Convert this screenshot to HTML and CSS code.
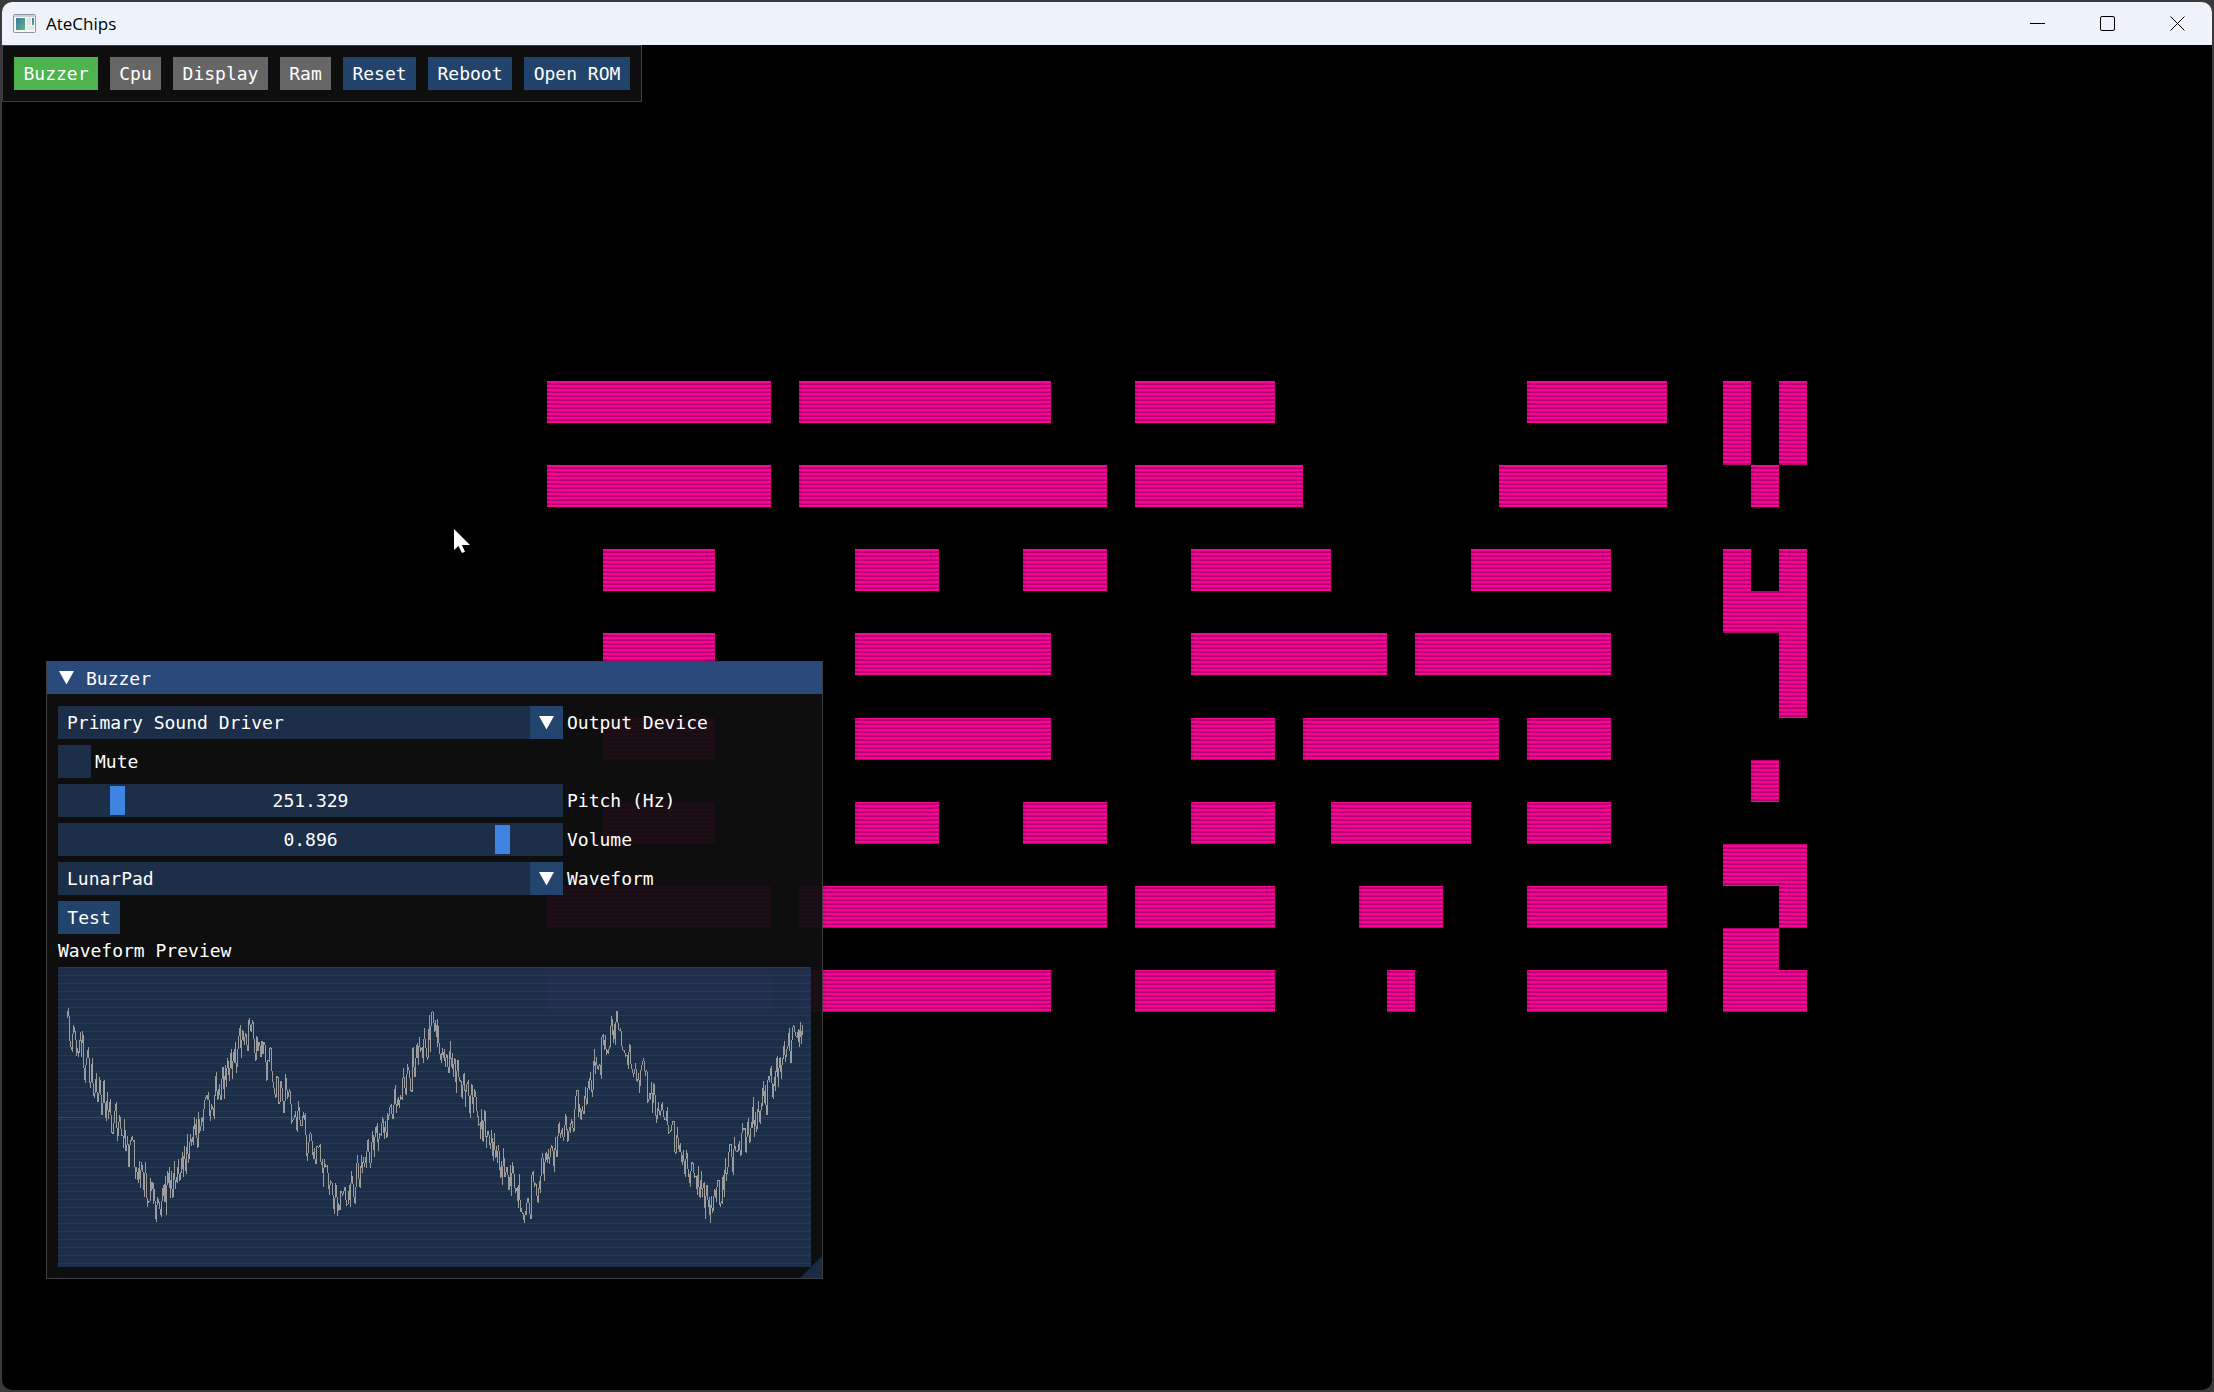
FILE: index.html
```html
<!DOCTYPE html>
<html lang="en">
<head>
  <title>AteChips</title>
  <meta charset="UTF-8">
  <link rel="stylesheet" href="styles.css">
</head>
<body>
  <div class="app">
    <header class="titlebar">
      <svg class="app-icon" viewBox="0 0 23 19" aria-hidden="true">
        <defs>
          <linearGradient id="pane" x1="0" y1="0" x2="1" y2="1">
            <stop offset="0" stop-color="#3f74a8"/>
            <stop offset="1" stop-color="#5cb87c"/>
          </linearGradient>
        </defs>
        <rect x="0.5" y="0.5" width="22" height="18" rx="1" fill="#f4f4f4" stroke="#8d949c"/>
        <rect x="1" y="1" width="21" height="2" fill="#c9d0d8"/>
        <rect x="3" y="4" width="9" height="12" fill="url(#pane)"/>
        <rect x="14" y="4" width="4" height="7" fill="#e2e2e2"/>
        <rect x="19" y="4" width="2" height="7" fill="url(#pane)"/>
        <rect x="14" y="12" width="7" height="4" fill="#e6e6e6"/>
      </svg>
      <h1>AteChips</h1>
      <div class="window-btns">
        <button aria-label="Minimize"><svg viewBox="0 0 15 15"><path d="M0 7.5h15"/></svg></button>
        <button aria-label="Maximize"><svg viewBox="0 0 15 15"><rect x="0.5" y="0.5" width="14" height="14" rx="1.5"/></svg></button>
        <button aria-label="Close"><svg viewBox="0 0 15 15"><path class="diag" d="M0.5 0.5l14 14M14.5 0.5l-14 14"/></svg></button>
      </div>
    </header>

    <main class="screen">
      <div class="display">
        <svg viewBox="0 0 64 32" preserveAspectRatio="none" role="img" aria-label="Chip-8 display">
          <path d="M12 8h8v1h-8z M21 8h9v1h-9z M33 8h5v1h-5z M47 8h5v1h-5z
            M12 10h8v1h-8z M21 10h11v1h-11z M33 10h6v1h-6z M46 10h6v1h-6z
            M14 12h4v1h-4z M23 12h3v1h-3z M29 12h3v1h-3z M35 12h5v1h-5z M45 12h5v1h-5z
            M14 14h4v1h-4z M23 14h7v1h-7z M35 14h7v1h-7z M43 14h7v1h-7z
            M14 16h4v1h-4z M23 16h7v1h-7z M35 16h3v1h-3z M39 16h7v1h-7z M47 16h3v1h-3z
            M14 18h4v1h-4z M23 18h3v1h-3z M29 18h3v1h-3z M35 18h3v1h-3z M40 18h5v1h-5z M47 18h3v1h-3z
            M12 20h8v1h-8z M21 20h11v1h-11z M33 20h5v1h-5z M41 20h3v1h-3z M47 20h5v1h-5z
            M12 22h8v1h-8z M21 22h9v1h-9z M33 22h5v1h-5z M42 22h1v1h-1z M47 22h5v1h-5z
            M54 8h1v2h-1z M56 8h1v2h-1z M55 10h1v1h-1z
            M54 12h1v1h1v-1h1v4h-1v-2h-2z M55 17h1v1h-1z
            M54 19h3v2h-1v-1h-2z M54 21h2v1h1v1h-3z"/>
        </svg>
      </div>

      <nav class="toolbar">
        <button class="on">Buzzer</button>
        <button class="off">Cpu</button>
        <button class="off">Display</button>
        <button class="off">Ram</button>
        <button>Reset</button>
        <button>Reboot</button>
        <button>Open ROM</button>
      </nav>

      <section class="panel">
        <h2>
          <svg class="arrow" viewBox="0 0 15 14" aria-hidden="true"><path d="M0 0h15l-7.500 13.500z"/></svg>
          Buzzer
        </h2>
        <div class="panel-body">
          <div class="row">
            <div class="combo">
              <select id="device"><option>Primary Sound Driver</option></select>
              <span class="combo-btn"><svg class="arrow" viewBox="0 0 15 14" aria-hidden="true"><path d="M0 0h15l-7.500 13.500z"/></svg></span>
            </div>
            <label for="device">Output Device</label>
          </div>
          <div class="row check">
            <input type="checkbox" id="mute">
            <label for="mute">Mute</label>
          </div>
          <div class="row">
            <div class="slider">
              <input type="range" id="pitch" min="200" max="700" step="0.001" value="251.329">
              <output for="pitch">251.329</output>
            </div>
            <label for="pitch">Pitch (Hz)</label>
          </div>
          <div class="row">
            <div class="slider">
              <input type="range" id="volume" min="0" max="1" step="0.001" value="0.896">
              <output for="volume">0.896</output>
            </div>
            <label for="volume">Volume</label>
          </div>
          <div class="row">
            <div class="combo">
              <select id="waveform"><option>LunarPad</option></select>
              <span class="combo-btn"><svg class="arrow" viewBox="0 0 15 14" aria-hidden="true"><path d="M0 0h15l-7.500 13.500z"/></svg></span>
            </div>
            <label for="waveform">Waveform</label>
          </div>
          <button class="test">Test</button>
          <p>Waveform Preview</p>
          <div class="plot">
            <svg viewBox="0 0 2259 900" preserveAspectRatio="none" role="img" aria-label="Waveform Preview">
              <path class="zero" d="M0 451.500h2259"/>
              <polyline transform="translate(-54 -201)" points="82,340 82,353 85,324 88,360 88,412 91,430 94,448 97,452 100,378 103,382 106,400 109,430 110,468 113,445 116,472 119,436 122,395 125,470 127,393 130,412 131,486 134,536 137,548 138,495 141,475 145,442 148,487 149,540 152,563 155,510 157,475 160,583 164,593 167,555 169,519 172,604 176,604 179,532 182,556 185,643 188,643 191,546 193,544 196,640 199,662 202,577 205,656 208,628 211,598 214,668 215,698 220,700 223,655 226,622 229,607 232,722 235,703 238,648 241,652 244,705 249,708 251,745 254,657 257,752 260,752 263,708 267,802 269,740 272,725 277,709 280,725 283,722 286,838 289,800 292,822 295,850 298,784 301,863 304,787 307,797 310,826 313,892 316,787 319,832 322,922 325,905 331,903 332,833 335,872 339,847 341,911 344,868 346,938 349,965 352,890 355,902 358,910 361,935 364,950 367,880 370,856 373,905 376,828 379,944 382,814 385,850 388,802 391,895 394,812 397,892 400,890 403,784 406,868 409,832 412,850 415,778 418,841 421,838 424,808 427,757 430,832 433,739 436,796 439,822 442,703 445,790 448,772 451,703 454,737 457,710 460,734 463,652 466,705 469,657 472,743 475,740 476,637 479,694 482,688 485,657 488,650 491,692 491,640 494,606 497,592 500,586 502,600 505,577 508,610 511,664 514,613 517,620 520,628 523,656 526,555 529,517 532,598 535,596 538,553 541,598 544,598 547,507 550,500 553,598 556,495 559,562 562,475 565,485 568,542 571,485 574,448 577,536 580,457 583,490 586,427 589,520 592,490 595,427 598,400 601,376 604,475 607,392 610,395 613,435 616,400 619,402 622,452 625,452 625,370 628,355 631,385 634,397 637,361 640,370 642,417 645,460 648,482 651,409 654,452 657,425 660,437 663,472 666,422 669,462 672,427 675,435 678,485 681,542 684,481 688,483 688,448 691,442 694,447 695,500 698,540 701,555 704,578 708,593 711,530 714,532 717,610 720,608 723,544 726,565 729,603 732,640 735,605 737,523 740,556 743,598 746,580 749,568 752,580 755,668 758,664 761,655 764,652 767,634 770,682 772,695 775,604 778,628 781,676 787,676 790,637 793,660 796,640 799,735 802,782 805,748 808,715 811,698 814,705 817,733 820,778 823,745 826,790 829,790 831,740 837,742 841,733 842,780 845,795 848,776 850,860 853,778 856,800 862,797 865,830 868,885 871,843 877,850 880,900 883,942 887,850 890,862 893,947 896,910 900,930 903,872 908,885 911,878 915,860 918,900 920,916 925,910 928,856 931,920 934,813 937,835 940,860 943,905 946,908 949,840 952,766 955,800 958,855 961,863 964,766 967,820 970,770 973,800 978,772 979,805 982,728 985,718 988,772 992,805 995,760 997,694 1000,710 1003,770 1006,682 1009,700 1012,670 1015,752 1018,700 1024,705 1027,652 1030,660 1033,718 1036,664 1039,712 1042,710 1043,640 1046,660 1049,622 1052,620 1054,613 1057,655 1060,655 1063,595 1066,556 1069,638 1072,610 1075,592 1078,625 1081,587 1087,600 1090,505 1093,545 1096,572 1099,586 1102,493 1106,510 1109,512 1112,572 1117,574 1117,450 1120,442 1123,530 1126,530 1129,448 1132,430 1135,495 1138,412 1141,455 1147,442 1150,488 1153,385 1156,430 1159,452 1162,480 1165,470 1168,346 1171,455 1174,340 1178,334 1181,340 1183,395 1186,360 1189,410 1192,358 1192,440 1195,378 1198,455 1201,465"/>
              <polyline transform="translate(1116 -81)" points="31,345 34,368 37,325 40,355 43,328 46,380 49,343 52,345 55,398 58,398 61,304 64,382 67,340 70,410 73,355 76,358 79,458 82,360 85,362 86,405 89,420 94,425 95,468 97,472 101,402 104,400 106,500 109,436 115,424 118,490 121,533 124,433 127,436 130,520 133,447 136,455 139,480 142,528 145,530 146,556 151,550 152,597 155,508 158,600 160,606 163,512 166,516 169,625 172,575 176,573 179,610 182,628 185,570 188,635 190,662 193,580 196,655 199,618 202,668 205,615 208,640 211,715 214,663 217,735 221,625 224,712 227,705 230,682 233,684 236,748 239,748 241,676 244,767 247,667 250,685 253,710 256,760 262,742 265,803 268,703 271,815 274,808 277,820 280,820 283,850 286,815 289,820 292,775 295,775 298,795 301,835 304,835 304,723 307,697 310,695 313,742 316,730 319,735 322,785 325,787 328,722 331,760 334,682 337,640 340,660 343,722 346,640 349,638 352,670 355,628 358,672 361,640 364,617 367,618 370,640 373,695 376,590 379,648 382,650 385,560 388,547 391,595 394,577 397,565 400,603 403,585 407,526 410,530 412,605 415,602 418,560 421,578 424,538 427,545 430,574 433,570 433,520 436,500 439,453 445,451 446,530 449,492 452,530 454,540 457,498 460,520 463,520 466,442 469,495 472,488 475,422 478,450 481,397 484,430 487,470 490,440 493,328 496,403 499,350 502,385 505,388 508,373 511,375 514,418 514,300 517,287 520,285 523,330 526,284 529,345 532,330 535,343 538,318 541,320 544,229 547,240 550,308 553,253 556,316 559,214 562,215 565,265 568,272 571,268 574,275 575,313 578,330 584,333 587,348 592,347 595,388 598,313 601,315 602,365 605,383 611,406 614,395 617,370 620,420 623,425 626,400 629,460 632,395 635,380 640,358 643,365 646,408 649,392 652,398 653,487 656,485 659,460 662,480 665,425 668,520 671,432 674,436 677,515 680,548 683,520 685,487 688,523 691,525 697,487 700,520 703,538 709,540 712,502 715,580 721,575 724,570 727,546 733,545 733,625 736,640 739,638 742,562 745,608 748,635 751,608 754,650 757,675 760,630 763,680 766,712 769,630 772,645 775,708 778,705 781,742 784,670 787,667 790,672 793,712 799,710 802,765 805,678 808,770 811,772 814,694 817,772 820,730 823,728 826,838 829,735 832,735 835,800 838,772 841,850 844,768 847,820 850,808 853,748 856,750 859,785 862,722 868,722 868,793 871,797 874,785 877,792 877,718 880,706 883,770 886,655 889,722 892,690 895,678 898,616 901,612 904,614 907,670 910,706 913,590 916,632 922,635 925,630 928,602 931,645 934,642 937,550 940,570 946,565 946,635 949,636 952,570 955,533 958,610 961,602 964,545 967,565 970,472 973,590 976,515 979,577 982,560 985,482 988,530 991,552 994,490 997,495 1000,422 1003,490 1006,435 1009,523 1012,523 1012,442 1015,408 1018,425 1024,378 1027,455 1030,478 1033,412 1036,452 1039,368 1042,347 1045,440 1048,360 1051,350 1054,418 1057,355 1060,355 1063,302 1066,365 1069,345 1072,320 1075,318 1078,263 1081,368 1084,368 1087,268 1090,256 1093,258 1096,285 1102,292 1105,268 1108,322 1111,247 1114,312 1117,256 1117,285"/>
            </svg>
          </div>
        </div>
        <span class="grip"></span>
      </section>

      <svg class="cursor" viewBox="0 0 16 24" aria-hidden="true"><path d="M0 0v21l4.500-4 3.500 7 3-1.200-3-6.800h8z"/></svg>
    </main>
  </div>
</body>
</html>
```
FILE: styles.css
```css
* {
  box-sizing: border-box;
}
body {
  margin: 0;
  padding: 2px;
  height: 100vh;
  background-color: #3a3a3a;
}
.app {
  display: flex;
  flex-direction: column;
  height: 100%;
  border-radius: 10px;
  overflow: hidden;
  background-color: #000;
}

/* title bar */
.titlebar {
  display: flex;
  align-items: center;
  flex: none;
  height: 43px;
  padding-left: 11px;
  background-color: #eef3fb;
}
.app-icon {
  width: 23px;
  height: 19px;
}
.titlebar h1 {
  margin: 0 auto 0 10px;
  font: 17px "Open Sans", sans-serif;
  color: #000;
}
.window-btns {
  display: flex;
  height: 100%;
}
.window-btns button {
  display: grid;
  place-items: center;
  width: 70px;
  padding: 0;
  border: none;
  background: none;
}
.window-btns svg {
  width: 15px;
  height: 15px;
  fill: none;
  stroke: #000;
  overflow: visible;
}

/* emulator screen */
.screen {
  position: relative;
  flex: 1;
  min-height: 0;
  font: 18px/21px "DejaVu Sans Mono", monospace;
  color: #fff;
}
.display {
  position: relative;
  height: 100%;
  aspect-ratio: 1792 / 1345;
  margin: 0 auto;
}
.display svg {
  display: block;
  width: 100%;
  height: 100%;
  fill: #ff009c;
  shape-rendering: crispEdges;
}
.display::after {
  content: "";
  position: absolute;
  inset: 0;
  background: repeating-linear-gradient(transparent 0 2px, rgba(0, 0, 0, 0.3) 2px 4px);
}

button, select {
  font: inherit;
  color: inherit;
}
.toolbar {
  position: absolute;
  top: 0;
  left: 0;
  display: grid;
  grid-template-columns: 84px 51px 95px 51px 73px 84px 106px;
  gap: 12px;
  padding: 11px;
  border: 1px solid #3e3e47;
  background-color: rgba(15, 15, 15, 0.94);
}
.toolbar button, .test {
  height: 33px;
  padding: 0;
  border: none;
  background-color: rgba(66, 150, 250, 0.4);
}
.toolbar .on {
  background-color: #4db34d;
}
.toolbar .off {
  background-color: #666;
}

/* buzzer window */
.panel {
  position: absolute;
  top: 616px;
  left: 44px;
  width: 777px;
  border: 1px solid #3e3e47;
  background-color: rgba(15, 15, 15, 0.94);
}
.panel h2 {
  display: flex;
  align-items: center;
  gap: 12px;
  height: 32px;
  margin: 0;
  padding-left: 12px;
  font: inherit;
  background-color: #294a7a;
}
.arrow {
  width: 15px;
  height: 14px;
  fill: #fff;
}
.panel-body {
  display: flex;
  flex-direction: column;
  gap: 6px;
  padding: 12px 11px 11px;
}
.row {
  display: grid;
  grid-template-columns: 505px 1fr;
  align-items: center;
  gap: 4px;
}
.row.check {
  grid-template-columns: 33px 1fr;
}
.combo, .slider {
  display: grid;
  height: 33px;
  background-color: rgba(41, 74, 122, 0.54);
}
.combo select {
  grid-area: 1 / 1;
  appearance: none;
  padding: 0 9px;
  border: none;
  border-radius: 0;
  background: none;
}
.combo-btn {
  grid-area: 1 / 1;
  justify-self: end;
  display: grid;
  place-items: center;
  width: 33px;
  background-color: #23446c;
  pointer-events: none;
}
.check input {
  appearance: none;
  width: 33px;
  height: 33px;
  margin: 0;
  background-color: rgba(41, 74, 122, 0.54);
}
.check input:checked {
  border: 6px solid #1d2e49;
  background-color: #4296fa;
}
.slider input {
  grid-area: 1 / 1;
  appearance: none;
  width: 100%;
  margin: 0;
  padding: 0 2px;
  background: none;
}
.slider input::-webkit-slider-thumb {
  appearance: none;
  width: 15px;
  height: 29px;
  background-color: #3d85e0;
}
.slider output {
  grid-area: 1 / 1;
  place-self: center;
  pointer-events: none;
}
.test {
  align-self: flex-start;
  width: 62px;
}
.panel p {
  margin: 0;
}
.plot {
  height: 300px;
  background:
    repeating-linear-gradient(rgba(38, 90, 70, 0.4) 0 1px, transparent 1px 8px),
    rgba(41, 74, 122, 0.54);
}
.plot svg {
  display: block;
  width: 100%;
  height: 100%;
  fill: none;
  stroke: #9c9c9c;
  stroke-width: 3;
  shape-rendering: crispEdges;
}
.plot .zero {
  stroke: #1f5a3c;
}
.grip {
  position: absolute;
  right: 0;
  bottom: 0;
  width: 22px;
  height: 22px;
  background-color: #1a2a40;
  clip-path: polygon(100% 0, 100% 100%, 0 100%);
}

.cursor {
  position: absolute;
  top: 484px;
  left: 452px;
  width: 16px;
  height: 24px;
  fill: #fff;
}
```
